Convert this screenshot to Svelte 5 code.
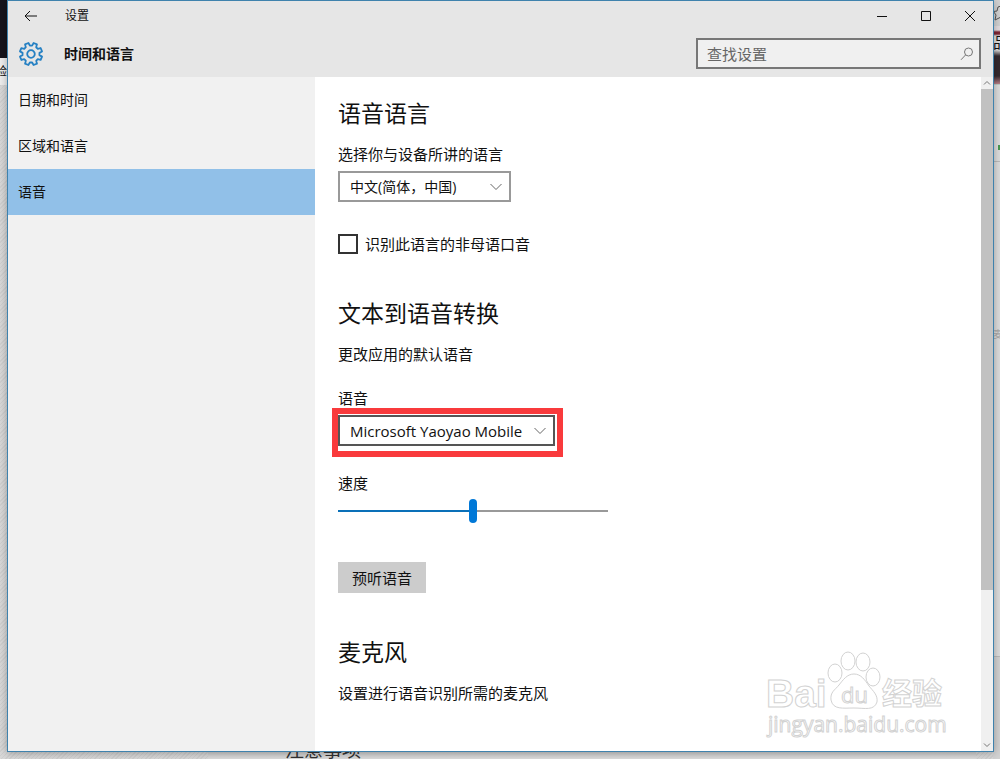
<script>
  const pages = ['日期和时间', '区域和语言', '语音'];
  let current = $state('语音');
  let query = $state('');
  let language = $state('中文(简体，中国)');
  let accent = $state(false);
  let voice = $state('Microsoft Yaoyao Mobile');
  let speed = $state(50);

  const toes = [
    [71, 30],
    [84, 18],
    [99, 19],
    [109, 34]
  ];
</script>

<div class="desktop">
  <div class="behind left" aria-hidden="true">
    <div class="photo"></div>
    <div class="strip"><span>验</span></div>
  </div>
  <div class="behind right" aria-hidden="true">
    <svg class="star" width="7" height="26" viewBox="0 0 7 26">
      <path d="M8 6 L5 7 L4 11 L0.500 11.500 L3 15 L2 20 L8 17" fill="none" stroke="#555" />
    </svg>
    <div class="thumb-photo"><span>品</span></div>
    <div class="panel"><i></i></div>
    <div class="panel lower"><span>麦</span></div>
  </div>
  <div class="behind below" aria-hidden="true"><span>注意事项</span></div>

  <div class="window">
    <header>
      <div class="titlebar">
        <button class="back" aria-label="返回">
          <svg width="14" height="12" viewBox="0 0 14 12"><path d="M6 1 L1 6 L6 11 M1 6 H13" /></svg>
        </button>
        <span class="app">设置</span>
        <div class="controls">
          <button aria-label="最小化"><svg width="12" height="12" viewBox="0 0 12 12"><path d="M1 6.500 H11" /></svg></button>
          <button aria-label="最大化"><svg width="12" height="12" viewBox="0 0 12 12"><path d="M1.500 1.500 H10.500 V10.500 H1.500 Z" /></svg></button>
          <button aria-label="关闭"><svg width="12" height="12" viewBox="0 0 12 12"><path d="M1 1 L11 11 M11 1 L1 11" /></svg></button>
        </div>
      </div>
      <div class="heading">
        <svg class="gear" width="26" height="26" viewBox="-13 -13 26 26">
          <path
            d="M-2.200 -8.200 L-1.800 -11.200 H1.800 L2.200 -8.200 L4.300 -7.400 L6.600 -9.200 L9.200 -6.600 L7.400 -4.300 L8.200 -2.200 L11.200 -1.800 V1.800 L8.200 2.200 L7.400 4.300 L9.200 6.600 L6.600 9.200 L4.300 7.400 L2.200 8.200 L1.800 11.200 H-1.800 L-2.200 8.200 L-4.300 7.400 L-6.600 9.200 L-9.200 6.600 L-7.400 4.300 L-8.200 2.200 L-11.200 1.800 V-1.800 L-8.200 -2.200 L-7.400 -4.300 L-9.200 -6.600 L-6.600 -9.200 L-4.300 -7.400 Z"
            transform="rotate(22.500)"
          />
          <circle r="3.800" />
        </svg>
        <h1>时间和语言</h1>
        <label class="search">
          <input type="text" placeholder="查找设置" aria-label="查找设置" bind:value={query} />
          <svg width="14" height="14" viewBox="0 0 14 14"><circle cx="8.500" cy="5" r="4" /><path d="M5.600 7.900 L1 12.800" /></svg>
        </label>
      </div>
    </header>

    <div class="body">
      <nav>
        {#each pages as page}
          <button class:active={page === current} onclick={() => (current = page)}>{page}</button>
        {/each}
      </nav>

      <main>
        <section>
          <h2>语音语言</h2>
          <label for="language">选择你与设备所讲的语言</label>
          <div class="select language">
            <select id="language" bind:value={language}>
              <option>中文(简体，中国)</option>
            </select>
            <svg width="12" height="8" viewBox="0 0 12 8"><path d="M0.500 1 L6 6.500 L11.500 1" /></svg>
          </div>
          <label class="check">
            <input type="checkbox" bind:checked={accent} />
            <span>识别此语言的非母语口音</span>
          </label>
        </section>

        <section>
          <h2>文本到语音转换</h2>
          <p>更改应用的默认语音</p>
          <label class="voice-label" for="voice">语音</label>
          <div class="select voice">
            <select id="voice" bind:value={voice}>
              <option>Microsoft Yaoyao Mobile</option>
            </select>
            <svg width="12" height="8" viewBox="0 0 12 8"><path d="M0.500 1 L6 6.500 L11.500 1" /></svg>
          </div>
          <label class="speed-label" for="speed">速度</label>
          <input id="speed" type="range" min="0" max="100" bind:value={speed} style="--fill: {speed}%" />
          <button class="preview">预听语音</button>
        </section>

        <section>
          <h2>麦克风</h2>
          <p>设置进行语音识别所需的麦克风</p>
        </section>
      </main>

      <div class="scrollbar" aria-hidden="true">
        <svg width="12" height="12" viewBox="0 0 12 12"><path d="M3 7.500 L6 4.500 L9 7.500" /></svg>
        <div class="track"><div class="grip"></div></div>
        <svg width="12" height="12" viewBox="0 0 12 12"><path d="M3 4.500 L6 7.500 L9 4.500" /></svg>
      </div>
    </div>
  </div>

  <svg class="watermark" width="190" height="100" viewBox="0 0 190 100" aria-hidden="true">
    <text x="2" y="64" class="brand" font-size="39">Bai</text>
    {#each toes as [cx, cy]}
      <ellipse {cx} {cy} rx="7" ry="9" />
    {/each}
    <path d="M90 31 C83 31 79 37 75 42 C71 47 66 49 67 57 C69 67 79 65 90 65 C101 65 110 68 113 59 C114 52 109 48 105 43 C101 37 97 31 90 31 Z" />
    <text x="77" y="60" font-size="22">du</text>
    <text x="118" y="61" class="cjk" font-size="30">经验</text>
    <text x="4" y="89" font-size="21">jingyan.baidu.com</text>
  </svg>
</div>

<style>
  :global(body) {
    margin: 0;
  }

  .desktop {
    position: relative;
    box-sizing: border-box;
    min-height: 100vh;
    padding: 0 6px 7px 7px;
    overflow: hidden;
    display: flex;
    background: repeating-linear-gradient(135deg, #cfcfcf 0 1px, #d8d8d8 1px 3px);
    color: #111;
    font: 15px/20px 'Open Sans', 'Noto Sans CJK SC', sans-serif;
  }

  button,
  input,
  select {
    margin: 0;
    border: 0;
    border-radius: 0;
    padding: 0;
    background: none;
    color: inherit;
    font: inherit;
  }

  svg {
    display: block;
    fill: none;
  }

  .behind {
    position: absolute;
    overflow: hidden;
  }

  .left {
    left: 0;
    top: 0;
    width: 7px;
  }

  .photo {
    height: 58px;
    background: #15141c;
  }

  .strip {
    height: 27px;
    background: #eee;
    display: flex;
    justify-content: flex-end;
    align-items: center;
    font-size: 12px;
  }

  .right {
    right: 0;
    top: 0;
    bottom: 0;
    width: 7px;
    background: #d2d2d2;
  }

  .thumb-photo {
    height: 58px;
    background: linear-gradient(#e3dcdf 0 4px, #7d2634 6px 8px, #ddd 10px 24px, #34292f 30px 50px, #b98088);
    font-size: 15px;
    line-height: 32px;
  }

  .panel {
    height: 76px;
    border-top: 1px solid #b9c9c4;
    border-bottom: 1px solid #bbb;
    background: #ddd;
  }

  .panel i {
    display: block;
    width: 2px;
    height: 5px;
    margin: 60px 0 0 5px;
    background: #4a9a50;
  }

  .lower {
    height: 494px;
    border-top: 0;
    color: #aaa;
    font-size: 10px;
    line-height: 344px;
  }

  .below {
    left: 208px;
    right: 24px;
    bottom: 0;
    height: 16px;
    background: linear-gradient(#bbb, #dcdcdc);
    color: #333;
  }

  .below span {
    display: block;
    padding-left: 77px;
    font-size: 19px;
    line-height: 14px;
  }

  .window {
    position: relative;
    flex: 1;
    display: flex;
    flex-direction: column;
    border: 1px solid #3f82ad;
    background: #fff;
    box-shadow: 0 1px 8px rgba(0, 0, 0, 0.3);
  }

  header {
    background: #e6e6e6;
  }

  .titlebar {
    display: flex;
    align-items: center;
    height: 29px;
    padding-right: 1px;
  }

  .back {
    width: 46px;
    height: 29px;
    display: grid;
    place-items: center;
  }

  .titlebar path {
    stroke: #111;
  }

  .app {
    flex: 1;
    padding-left: 11px;
    font-size: 12px;
  }

  .controls {
    display: flex;
  }

  .controls button {
    display: grid;
    place-items: center;
    width: 44px;
    height: 29px;
  }

  .heading {
    display: flex;
    align-items: center;
    height: 47px;
    padding: 0 12px 0 10px;
  }

  .gear {
    stroke: #2580c3;
    stroke-width: 1.8;
    stroke-linejoin: round;
  }

  h1 {
    flex: 1;
    margin: 0;
    padding-left: 20px;
    font-size: 14px;
    line-height: 20px;
    font-weight: 700;
  }

  .search {
    box-sizing: border-box;
    display: flex;
    align-items: center;
    flex: 0 1 285px;
    height: 31px;
    padding: 0 5px 0 9px;
    border: 2px solid #777;
    background: #f0f0f0;
  }

  .search input {
    flex: 1;
    min-width: 0;
    outline: none;
  }

  .search input::placeholder {
    color: #666;
    opacity: 1;
  }

  .search svg {
    stroke: #777;
  }

  .body {
    flex: 1;
    display: flex;
  }

  nav {
    flex: 0 0 307px;
    background: #f1f1f1;
  }

  nav button {
    display: block;
    width: 100%;
    height: 46px;
    padding-left: 10px;
    font-size: 14px;
    text-align: left;
  }

  nav .active {
    background: #91c0e8;
  }

  main {
    flex: 1;
    padding: 20px 23px;
  }

  section {
    display: flex;
    flex-direction: column;
    align-items: flex-start;
    margin-bottom: 43px;
  }

  section:last-child {
    margin-bottom: 0;
  }

  h2 {
    margin: 0 0 15px;
    font-size: 23px;
    line-height: 32px;
    font-weight: 400;
  }

  p {
    margin: 0;
  }

  .select {
    position: relative;
    margin-top: 7px;
  }

  .select select {
    box-sizing: border-box;
    display: block;
    width: 100%;
    height: 31px;
    padding: 0 28px 0 10px;
    border: 2px solid #999;
    background: #fff;
    appearance: none;
  }

  .select svg {
    position: absolute;
    right: 9px;
    top: 12px;
    stroke: #666;
    pointer-events: none;
  }

  .language {
    width: 173px;
  }

  .language select {
    font-size: 14px;
  }

  .voice {
    width: 217px;
  }

  .voice select {
    border-color: #555;
  }

  .voice::after {
    content: '';
    position: absolute;
    inset: -7px -8px -11px -6px;
    border: 6px solid #f93a3c;
    pointer-events: none;
  }

  .check {
    display: flex;
    align-items: center;
    gap: 7px;
    margin-top: 32px;
  }

  .check input {
    box-sizing: border-box;
    width: 20px;
    height: 20px;
    border: 2px solid #333;
    appearance: none;
  }

  .check input:checked {
    background: #0078d7;
  }

  .voice-label {
    margin-top: 24px;
  }

  .speed-label {
    margin-top: 27px;
  }

  #speed {
    width: 270px;
    height: 24px;
    margin-top: 6px;
    appearance: none;
    background: linear-gradient(to right, #0a70b8 var(--fill), #999 var(--fill)) center / 100% 2px no-repeat;
  }

  #speed::-webkit-slider-thumb {
    appearance: none;
    width: 8px;
    height: 24px;
    border-radius: 4px;
    background: #0078d7;
  }

  .preview {
    height: 31px;
    margin-top: 39px;
    padding: 0 14px;
    background: #ccc;
  }

  .scrollbar {
    display: flex;
    flex-direction: column;
    width: 12px;
    background: #f0f0f0;
  }

  .scrollbar svg {
    stroke: #777;
  }

  .track {
    flex: 1;
  }

  .grip {
    height: 77%;
    background: #c1c1c1;
  }

  .watermark {
    position: absolute;
    right: 46px;
    bottom: 16px;
    fill: #fff;
    stroke: #d2d2d2;
    stroke-width: 1;
    font-family: 'Open Sans', sans-serif;
    pointer-events: none;
  }

  .brand {
    font-family: 'Liberation Sans', sans-serif;
    font-weight: 700;
  }

  .cjk {
    font-family: 'Noto Sans CJK SC', sans-serif;
    font-weight: 700;
  }
</style>
